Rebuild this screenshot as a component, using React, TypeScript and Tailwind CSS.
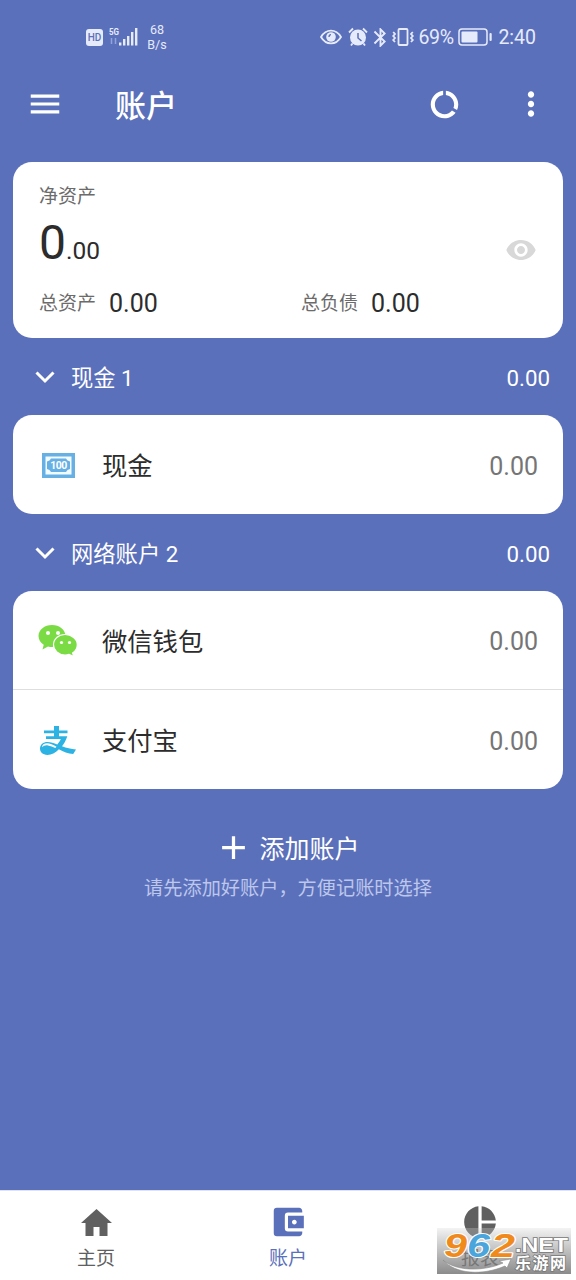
import type { ReactNode } from "react";
import {
  MdAccountBalanceWallet,
  MdAdd,
  MdBluetooth,
  MdDataUsage,
  MdMenu,
  MdMoreVert,
  MdPieChart,
  MdVisibility,
} from "react-icons/md";

type Account = {
  name: string;
  amount: string;
  icon: ReactNode;
};

type Group = {
  title: string;
  total: string;
  accounts: Account[];
};

function CashIcon() {
  return (
    <svg width="33" height="25" viewBox="0 0 33 25">
      <rect x="1.75" y="1.75" width="29.5" height="21.5" fill="#f2fbff" stroke="#67b0e4" strokeWidth="3.5" />
      <path d="M9 5.500h15l1.500 2 2.500 1v7.500l-2.500 1-1.500 2H9l-1.500-2-2.500-1v-7.500l2.500-1z" fill="#67b0e4" />
      <text
        x="8.2"
        y="16.2"
        textLength="17"
        lengthAdjust="spacing"
        className="fill-white font-['Roboto',sans-serif] text-[10.5px] font-bold"
      >
        100
      </text>
    </svg>
  );
}

function WechatIcon() {
  return (
    <svg width="40" height="34" viewBox="0 0 40 34">
      <path
        d="M14 1C6.500 1 .5 5.800.5 12c0 3.600 2 6.600 5.200 8.700L4.500 25.500l5.500-3c1.500.4 2.500.5 4 .5 7.500 0 13.500-4.800 13.500-11S21.500 1 14 1z"
        fill="#7bdb45"
      />
      <path
        d="M27 10.500c-6.500 0-11.500 4.500-11.500 10.200S20.500 31 27 31c1.500 0 2.800-.2 4.100-.6l4.700 2.200-1.200-3.700c2.900-1.900 4.700-4.800 4.700-8.200 0-5.700-5.800-10.200-12.300-10.200z"
        fill="#7bdb45"
        stroke="#fff"
        strokeWidth="1.2"
      />
      <circle cx="10" cy="9" r="2" fill="#fff" />
      <circle cx="20" cy="9" r="2" fill="#fff" />
      <circle cx="23.500" cy="18.500" r="1.600" fill="#fff" />
      <circle cx="31.500" cy="18.500" r="1.600" fill="#fff" />
    </svg>
  );
}

function AlipayIcon() {
  return (
    <svg width="38" height="32" viewBox="0 0 38 32" fill="#2cb2e3">
      <path d="M15 1h5v4.500h8.500v2.700H20v3h8.300c-1.500 4.300-3.200 7.500-5.300 10.100 4.500 1.700 9 2.800 14 3.200L34.200 29c-5.200-.4-9.800-2.200-14.300-4.700-3.700 3.700-7.300 5.600-11.400 5.600C3.500 29.900 1 27 1 23.600c0-4 3.200-6.600 7.500-6.600 3.200 0 6.200 1 9.800 2.400 1.600-1.700 2.700-3.400 3.500-5.400H7v-2.800h8v-3H5V5.500h10z" />
      <path d="M17.500 21.800c-3.500-2-6.600-3.500-9.400-3.500-3 0-4.900 1.500-5.100 4 1.500-1.600 3.500-2.300 6-1.900 2.600.4 4.800 1.600 7.300 2.700z" fill="#fff" />
    </svg>
  );
}

function HomeIcon() {
  return (
    <svg width="31" height="27" viewBox="0 0 31 27" fill="#606060">
      <path d="M15.500 0L31 14h-4.500v13H18.500v-9h-6v9H4.500V14H0z" />
    </svg>
  );
}

const groups: Group[] = [
  {
    title: "现金 1",
    total: "0.00",
    accounts: [{ name: "现金", amount: "0.00", icon: <CashIcon /> }],
  },
  {
    title: "网络账户 2",
    total: "0.00",
    accounts: [
      { name: "微信钱包", amount: "0.00", icon: <WechatIcon /> },
      { name: "支付宝", amount: "0.00", icon: <AlipayIcon /> },
    ],
  },
];

function StatusBar() {
  return (
    <div className="flex h-[74px] items-center justify-between pr-10 pl-[86px] text-[#e6ebfb]">
      <div className="flex items-center">
        <span className="flex h-[17px] w-[17px] items-center justify-center rounded-[3px] bg-[#e6ebfb] text-[10px] font-medium text-[#5b70bb]">
          HD
        </span>
        <svg className="ml-[6px]" width="30" height="22" viewBox="0 0 30 22" fill="#e6ebfb">
          <text x="0" y="8.5" textLength="10" lengthAdjust="spacingAndGlyphs" className="text-[9.5px] font-bold">
            5G
          </text>
          <path d="M2.500 12v6M6.500 12v6" stroke="#94a3dc" strokeWidth="1.5" />
          <rect x="10" y="16.5" width="2.4" height="3" />
          <rect x="14" y="13" width="2.4" height="6.5" />
          <rect x="18" y="10" width="2.4" height="9.5" />
          <rect x="22" y="6" width="2.4" height="13.5" />
          <rect x="26" y="2" width="2.4" height="17.5" />
        </svg>
        <div className="ml-2 w-5 text-center text-[12.5px] leading-[15px]">
          <p>68</p>
          <p>B/s</p>
        </div>
      </div>

      <div className="flex items-center">
        <svg width="22" height="16" viewBox="0 0 22 16" fill="none" stroke="#e6ebfb" strokeWidth="1.8">
          <path d="M1 8c5-8.500 15-8.500 20 0-5 8.500-15 8.500-20 0z" />
          <circle cx="11" cy="8" r="4.8" fill="#e6ebfb" stroke="none" />
          <path d="M9 8c0-1.700.8-2.300 2-2.300" stroke="#5b70bb" strokeWidth="1.3" />
        </svg>
        <svg className="ml-[6px]" width="20" height="20" viewBox="0 0 20 20" fill="none" stroke="#e6ebfb" strokeWidth="1.8">
          <circle cx="10" cy="10.5" r="8" fill="#e6ebfb" stroke="none" />
          <path d="M1 5.500l4-4M19 5.500l-4-4M4.500 16.500L3 18.500M15.500 16.500l1.500 2" />
          <path d="M10 6v5l3.500 3" stroke="#5b70bb" strokeWidth="1.5" />
        </svg>
        <MdBluetooth className="ml-[1px] h-[23px] w-[23px]" />
        <svg width="22" height="20" viewBox="0 0 22 20" fill="none" stroke="#e6ebfb" strokeWidth="1.8">
          <rect x="6.5" y="2" width="9" height="16" rx="1" />
          <path d="M1.200 5l1.800 2-1.800 2L3 11l-1.800 2L3 15M20.800 5L19 7l1.800 2-1.800 2 1.800 2-1.800 2" />
        </svg>
        <span className="ml-1 w-[37px] pt-[2px] text-[19.5px] tracking-[-0.3px]">69%</span>
        <svg className="ml-[3px]" width="35" height="18" viewBox="0 0 35 18" fill="none">
          <rect x="1" y="1" width="28" height="16" rx="3" stroke="#e6ebfb" strokeWidth="1.5" />
          <rect x="3.5" y="3.5" width="16" height="11" rx="1" fill="#e6ebfb" />
          <rect x="31.5" y="5" width="2.2" height="8" rx="1" fill="#e6ebfb" />
        </svg>
        <span className="ml-[5px] pt-[2px] text-[19.5px]">2:40</span>
      </div>
    </div>
  );
}

function Watermark() {
  return (
    <div className="absolute right-[5px] bottom-[6px] flex h-[60px] w-[134px] items-end">
      <div className="h-[46px] w-full bg-linear-to-b from-[#d8d8d8]/30 to-[#777777]/85" />
      <svg className="absolute inset-0" width="134" height="60" viewBox="0 0 134 60">
        <g
          className="font-['Liberation_Sans',sans-serif] text-[33px] font-bold italic"
          stroke="#fff"
          strokeWidth="2"
          strokeLinejoin="round"
          paintOrder="stroke"
        >
          <text x="7" y="43" textLength="23" lengthAdjust="spacingAndGlyphs" fill="#f08a1d">
            9
          </text>
          <text x="30" y="43" textLength="23" lengthAdjust="spacingAndGlyphs" fill="#4aa5dc">
            6
          </text>
          <text x="54" y="43" textLength="24" lengthAdjust="spacingAndGlyphs" fill="#f08a1d">
            2
          </text>
        </g>
        <text
          x="78"
          y="37.5"
          textLength="53"
          lengthAdjust="spacingAndGlyphs"
          className="font-['Liberation_Sans',sans-serif] text-[20px] font-bold"
          fill="#fff"
          stroke="#777"
          strokeWidth="1.5"
          paintOrder="stroke"
        >
          .NET
        </text>
        <path d="M6 46c12 11 40 12 60 3l-4-2 12-2-4 9-2-2c-23 10-50 8-62-6z" fill="#fff" stroke="#888" strokeWidth=".6" />
        <text
          x="78"
          y="55"
          textLength="51"
          className="font-['Noto_Sans_CJK_SC',sans-serif] text-[16px] font-bold"
          fill="#fff"
          stroke="#777"
          strokeWidth="1.5"
          paintOrder="stroke"
        >
          乐游网
        </text>
      </svg>
    </div>
  );
}

export default function App() {
  return (
    <div className="flex h-[1280px] w-[576px] flex-col overflow-hidden bg-[#5b70bb] font-['Roboto','Noto_Sans_CJK_SC',sans-serif] text-white">
      <StatusBar />

      <header className="flex h-[60px] items-center pr-[26px] pl-[26px]">
        <MdMenu className="h-[38px] w-[38px]" />
        <h1 className="ml-[51px] pt-[5px] text-[31px] leading-[40px] font-medium">账户</h1>
        <MdDataUsage className="ml-auto h-[33px] w-[33px]" />
        <MdMoreVert className="ml-[51px] h-[38px] w-[38px]" />
      </header>

      <main className="flex flex-1 flex-col px-[13px] pt-7">
        <section className="flex h-[176px] flex-col rounded-[19px] bg-white px-[26px] pt-[22px] text-[#2c2c2c]">
          <p className="text-[19px] leading-[26px] text-[#6b6b6b]">净资产</p>
          <div className="flex h-[79px] items-center justify-between">
            <p className="pb-[2px] leading-[60px]">
              <span className="text-[48px]">0</span>
              <span className="text-[24.5px]">.00</span>
            </p>
            <MdVisibility className="h-8 w-8 text-[#d8d8d8]" />
          </div>
          <div className="grid grid-cols-[262px_1fr] text-[25px] leading-[28px]">
            <p className="flex items-center">
              <span className="mr-[13px] pt-px text-[19px] text-[#6b6b6b]">总资产</span>
              <span className="pt-px">0.00</span>
            </p>
            <p className="flex items-center">
              <span className="mr-[13px] pt-px text-[19px] text-[#6b6b6b]">总负债</span>
              <span className="pt-px">0.00</span>
            </p>
          </div>
        </section>

        {groups.map((group) => (
          <section key={group.title}>
            <div className="flex h-[77px] items-center pr-[13px] pl-[22px] text-[22.3px]">
              <svg className="mt-[2px]" width="20" height="13" viewBox="0 0 20 13" fill="none" stroke="#fff" strokeWidth="3">
                <path d="M1.500 1.500L10 10l8.500-8.500" />
              </svg>
              <h2 className="ml-4 flex-1 pt-[5px]">{group.title}</h2>
              <span className="pt-[4px]">{group.total}</span>
            </div>
            <ul className="divide-y divide-[#dedede] rounded-[19px] bg-white">
              {group.accounts.map((account) => (
                <li key={account.name} className="flex h-[99px] items-center px-[25px] text-[25.3px] text-[#2c2c2c]">
                  <span className="flex w-10 justify-center pt-[2px]">{account.icon}</span>
                  <span className="ml-6 flex-1 pt-[5px]">{account.name}</span>
                  <span className="pt-1 text-[25px] text-[#757575]">{account.amount}</span>
                </li>
              ))}
            </ul>
          </section>
        ))}

        <div className="mt-[38px] flex flex-col items-center">
          <button className="flex h-10 items-center text-[25px]">
            <MdAdd className="mr-[6px] -ml-[2px] h-[39px] w-[39px]" />
            <span className="pt-[5px]">添加账户</span>
          </button>
          <p className="mt-[9px] text-[19.2px] leading-[26px] text-[#bdc7ec]">请先添加好账户，方便记账时选择</p>
        </div>
      </main>

      <nav className="relative grid h-[90px] grid-cols-3 border-t border-[#e0e3ee] bg-white text-[19px] leading-[26px] text-[#606060]">
        <div className="flex flex-col items-center pt-[12px]">
          <div className="mb-[5px] flex h-[38px] items-center">
            <HomeIcon />
          </div>
          主页
        </div>
        <div className="flex flex-col items-center pt-[12px] text-[#5b70bb]">
          <MdAccountBalanceWallet className="mb-[5px] h-[38px] w-[38px]" />
          账户
        </div>
        <div className="flex flex-col items-center pt-[12px]">
          <MdPieChart className="mb-[5px] h-[38px] w-[38px]" />
          报表
        </div>
        <Watermark />
      </nav>
    </div>
  );
}
